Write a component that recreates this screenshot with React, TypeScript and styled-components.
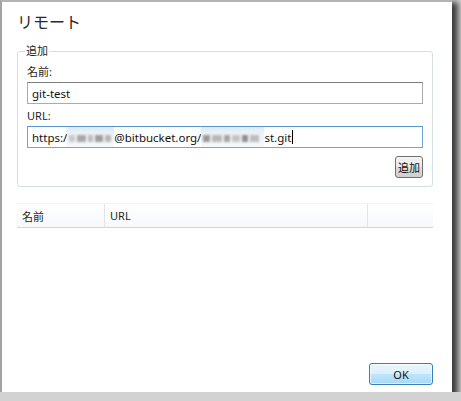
import styled, { createGlobalStyle } from "styled-components";

const GlobalStyle = createGlobalStyle`
  html, body {
    margin: 0;
    padding: 0;
    background: #d2d2d2;
  }
  body {
    font-family: "Noto Sans", "Noto Sans CJK JP", sans-serif;
    font-size: 11px;
    color: #1e1e1e;
  }
`;

const Dialog = styled.div`
  box-sizing: border-box;
  width: 452px;
  height: 392px;
  background: #fff;
  border-left: 2px solid #a3a3a3;
  border-top: 2px solid #b4b4b4;
  box-shadow: 4px 4px 6px 2px rgba(0, 0, 0, 0.72);
  padding: 8px 19px 7px 15px;
  display: flex;
  flex-direction: column;
`;

const Title = styled.h1`
  margin: 0;
  font-size: 16px;
  font-weight: normal;
  line-height: 24px;
  color: #2a2a2a;
`;

const Group = styled.fieldset`
  margin: 10px 0 0;
  padding: 6px 9px 8px;
  border: 1px solid #d5dfe5;
  border-radius: 3px;
  display: flex;
  flex-direction: column;
`;

const Legend = styled.legend`
  padding: 0 1px;
  margin-left: -2px;
  line-height: 14px;
`;

const Label = styled.div`
  line-height: 15px;
  margin-bottom: 3px;
`;

const TextBox = styled.div<{ $focused?: boolean }>`
  box-sizing: border-box;
  height: 22px;
  border: 1px solid ${(p) => (p.$focused ? "#6fa6d6" : "#a9abaf")};
  border-top-color: ${(p) => (p.$focused ? "#5a96cc" : "#7a7c80")};
  padding: 0 4px;
  display: flex;
  align-items: center;
  white-space: nowrap;
  overflow: hidden;
  font-size: 11.5px;
  color: #111;
  margin-bottom: 4px;
`;

// pixelated / blurred part of the url
const Mosaic = styled.span<{ $w: number }>`
  display: inline-flex;
  align-items: center;
  gap: 2px;
  width: ${(p) => p.$w}px;
  height: 22px;
  padding: 0 2px;
  box-sizing: border-box;
  background: linear-gradient(#dde8f2, #eef3f8 40%, #f7f9fb);
`;

const MosaicBlock = styled.span<{ $w: number; $shade: string }>`
  display: inline-block;
  width: ${(p) => p.$w}px;
  height: 7px;
  margin-top: 2px;
  background: ${(p) => p.$shade};
  filter: blur(1px);
`;

const Caret = styled.span`
  display: inline-block;
  width: 1px;
  height: 14px;
  background: #000;
  margin-left: 1px;
`;

const ButtonRow = styled.div`
  display: flex;
  justify-content: flex-end;
  margin-top: 4px;
`;

const SmallButton = styled.button`
  box-sizing: border-box;
  height: 22px;
  padding: 0 2px;
  font: inherit;
  font-size: 11px;
  color: #111;
  border: 1px solid #707070;
  border-radius: 3px;
  background: linear-gradient(#f2f2f2 0%, #ebebeb 50%, #dddddd 51%, #cfcfcf 100%);
`;

const Table = styled.div`
  margin-top: 16px;
  flex: 1;
`;

const HeaderRow = styled.div`
  display: grid;
  grid-template-columns: 87px 263px 1fr;
  height: 23px;
  background: linear-gradient(#ffffff, #f7f8fa);
  border-top: 1px solid #f0f1f3;
  border-bottom: 1px solid #d5d5d5;
`;

const HeaderCell = styled.div`
  display: flex;
  align-items: center;
  padding-left: 5px;
  & + & {
    border-left: 1px solid #e3e4e6;
  }
`;

const Footer = styled.div`
  display: flex;
  justify-content: flex-end;
`;

const OkButton = styled.button`
  box-sizing: border-box;
  width: 64px;
  height: 22px;
  font: inherit;
  font-size: 11px;
  color: #111;
  border: 1px solid #3c7fb1;
  border-radius: 3px;
  background: linear-gradient(#eaf6fd 0%, #d9f0fc 50%, #bee6fd 51%, #a7d9f5 100%);
  box-shadow: inset 0 0 0 1px rgba(255, 255, 255, 0.6);
`;

const userBlocks = [
  { w: 6, shade: "#c9c9c9" },
  { w: 9, shade: "#a8a8a8" },
  { w: 5, shade: "#bdbdbd" },
  { w: 8, shade: "#9e9e9e" },
  { w: 6, shade: "#b6b6b6" },
];

const repoBlocks = [
  { w: 7, shade: "#9a9a9a" },
  { w: 10, shade: "#b8b8b8" },
  { w: 6, shade: "#a4a4a4" },
  { w: 8, shade: "#c4c4c4" },
  { w: 6, shade: "#8f8f8f" },
  { w: 9, shade: "#bdbdbd" },
];

export default function App() {
  return (
    <>
      <GlobalStyle />
      <Dialog>
        <Title>リモート</Title>
        <Group>
          <Legend>追加</Legend>
          <Label>名前:</Label>
          <TextBox>git-test</TextBox>
          <Label>URL:</Label>
          <TextBox $focused>
            https:/
            <Mosaic $w={47}>
              {userBlocks.map((b, i) => (
                <MosaicBlock key={i} $w={b.w} $shade={b.shade} />
              ))}
            </Mosaic>
            @bitbucket.org/
            <Mosaic $w={63}>
              {repoBlocks.map((b, i) => (
                <MosaicBlock key={i} $w={b.w} $shade={b.shade} />
              ))}
            </Mosaic>
            st.git
            <Caret />
          </TextBox>
          <ButtonRow>
            <SmallButton>追加</SmallButton>
          </ButtonRow>
        </Group>
        <Table>
          <HeaderRow>
            <HeaderCell>名前</HeaderCell>
            <HeaderCell>URL</HeaderCell>
            <HeaderCell />
          </HeaderRow>
        </Table>
        <Footer>
          <OkButton>OK</OkButton>
        </Footer>
      </Dialog>
    </>
  );
}
